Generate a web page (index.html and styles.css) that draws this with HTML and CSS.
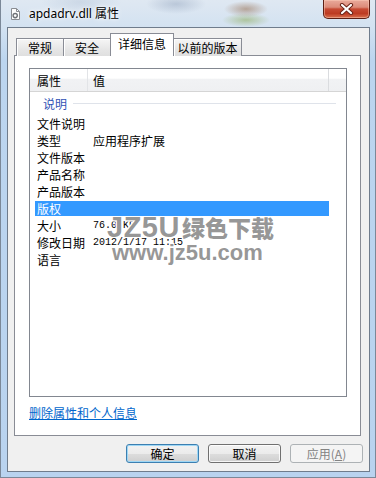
FILE: index.html
```html
<!DOCTYPE html>
<html lang="zh-CN">
<head>
<meta charset="utf-8">
<title>apdadrv.dll 属性</title>
<link rel="stylesheet" href="styles.css">
</head>
<body>
<div class="window">
  <div class="titlebar">
    <svg class="app-icon" width="11" height="12" viewBox="0 0 11 12">
      <path d="M1.5 0.5h5l3 3v8h-8z" fill="#fdfdfd" stroke="#8a8d92"/>
      <path d="M6.5 0.5v3h3" fill="none" stroke="#8a8d92"/>
      <circle cx="5.2" cy="7.6" r="2.1" fill="none" stroke="#6f7378" stroke-width="1.4"/>
    </svg>
    <span class="title">apdadrv.dll 属性</span>
    <div class="close">
      <svg width="15" height="12" viewBox="0 0 15 12">
        <path d="M3 2 L12 10 M12 2 L3 10" stroke="#6b2418" stroke-width="4.2" stroke-linecap="round"/>
        <path d="M3 2 L12 10 M12 2 L3 10" stroke="#ffffff" stroke-width="2.2" stroke-linecap="round"/>
      </svg>
    </div>
  </div>
  <div class="client">
    <div class="tabs">
      <div class="tab t1">常规</div>
      <div class="tab t2">安全</div>
      <div class="tab t3 active">详细信息</div>
      <div class="tab t4">以前的版本</div>
    </div>
    <div class="panel">
      <div class="listview">
        <div class="lv-header">
          <div class="hcell c1">属性</div>
          <div class="hcell c2">值</div>
          <div class="hfill"></div>
        </div>
        <div class="group"><span class="group-name">说明</span><span class="group-line"></span></div>
        <div class="rows">
          <div class="row"><span class="k">文件说明</span><span class="v"></span></div>
          <div class="row"><span class="k">类型</span><span class="v">应用程序扩展</span></div>
          <div class="row"><span class="k">文件版本</span><span class="v"></span></div>
          <div class="row"><span class="k">产品名称</span><span class="v"></span></div>
          <div class="row"><span class="k">产品版本</span><span class="v"></span></div>
          <div class="row selected"><span class="k">版权</span><span class="v"></span></div>
          <div class="row"><span class="k">大小</span><span class="v mono">76.0 KB</span></div>
          <div class="row"><span class="k">修改日期</span><span class="v mono">2012/1/17 11:15</span></div>
          <div class="row"><span class="k">语言</span><span class="v"></span></div>
        </div>
        <div class="watermark">
          <div class="wm1"><span class="wm-latin">JZ5U</span><span class="wm-cjk">绿色下载</span></div>
          <div class="wm2">www.jz5u.com</div>
        </div>
      </div>
      <a class="link" href="#">删除属性和个人信息</a>
    </div>
    <div class="buttons">
      <div class="btn default">确定</div>
      <div class="btn">取消</div>
      <div class="btn disabled">应用(<u>A</u>)</div>
    </div>
  </div>
</div>
</body>
</html>
```

FILE: styles.css
```css
html, body {
  margin: 0;
  padding: 0;
}

body {
  width: 376px;
  height: 478px;
  overflow: hidden;
  font-family: "Noto Sans CJK SC", "Noto Sans", sans-serif;
  font-size: 12px;
  color: #000;
}

.window {
  width: 376px;
  height: 478px;
  box-sizing: border-box;
  display: flex;
  flex-direction: column;
  border: 1px solid #7b8898;
  border-top: none;
  padding-bottom: 5px;
  background:
    radial-gradient(ellipse 22px 8px at 245px 9px, rgba(150, 110, 80, 0.55), rgba(150, 110, 80, 0) 100%),
    radial-gradient(ellipse 24px 7px at 245px 20px, rgba(140, 170, 90, 0.55), rgba(140, 170, 90, 0) 100%),
    radial-gradient(ellipse 30px 10px at 175px 4px, rgba(120, 140, 170, 0.35), rgba(120, 140, 170, 0) 100%),
    radial-gradient(ellipse 40px 12px at 80px 2px, rgba(150, 170, 195, 0.25), rgba(150, 170, 195, 0) 100%),
    linear-gradient(#dfe8f2 0px, #d3e2f1 27px, #bcd5ef 60px, #b9d3ef 100%);
}

/* ---------- title bar ---------- */
.titlebar {
  height: 27px;
  flex: none;
  display: flex;
  align-items: center;
  padding-left: 9px;
}

.app-icon {
  flex: none;
  margin-right: 8px;
}

.title {
  font-family: "Noto Sans", "Noto Sans CJK SC", sans-serif;
  font-size: 12px;
  line-height: 16px;
  color: #000;
  text-shadow: 0 0 6px #fff, 0 0 3px #fff;
}

.close {
  align-self: flex-start;
  margin-left: auto;
  margin-right: 5px;
  width: 47px;
  height: 19px;
  box-sizing: border-box;
  border: 1px solid #5d1f14;
  border-top: none;
  border-radius: 0 0 5px 5px;
  background: linear-gradient(#e9aa9b 0%, #dc8b79 40%, #c64a33 50%, #bd3b22 75%, #d9714f 100%);
  box-shadow: inset 0 0 0 1px rgba(255, 210, 190, 0.45);
  display: flex;
  align-items: center;
  justify-content: center;
}

/* ---------- client ---------- */
.client {
  flex: 1;
  margin: 0 5px 0 6px;
  box-sizing: border-box;
  border: 1px solid #6f7c8c;
  background: #f0f0f0;
  display: flex;
  flex-direction: column;
}

.tabs {
  display: flex;
  align-items: flex-end;
  padding-top: 5px;
  padding-left: 8px;
  margin-bottom: -1px;
  position: relative;
  z-index: 1;
}

.tab {
  box-sizing: border-box;
  height: 18px;
  border: 1px solid #898c95;
  border-bottom: none;
  margin-left: -1px;
  background: linear-gradient(#f6f6f6, #e6e6e6 60%, #dfdfdf);
  box-shadow: inset 1px 1px 0 #ffffff;
  display: flex;
  align-items: center;
  justify-content: center;
  font-size: 12px;
  line-height: 16px;
  padding-top: 1px;
}

.tab.t1 { width: 48px; margin-left: 0; }
.tab.t2 { width: 48px; }
.tab.t3 { width: 64px; }
.tab.t4 { width: 69px; }

.tab.active {
  height: 23px;
  background: #ffffff;
  box-shadow: none;
  padding-top: 0;
  padding-bottom: 3px;
}

.panel {
  margin-left: 6px;
  width: 347px;
  height: 381px;
  box-sizing: border-box;
  border: 1px solid #898c95;
  background: #ffffff;
  display: flex;
  flex-direction: column;
  align-items: flex-start;
}

/* ---------- list view ---------- */
.listview {
  position: relative;
  margin: 12px 0 0 14px;
  width: 318px;
  height: 329px;
  box-sizing: border-box;
  border: 1px solid #828790;
  background: #fff;
  overflow: hidden;
}

.lv-header {
  display: flex;
  height: 23px;
  box-sizing: border-box;
  border-bottom: 1px solid #d5d5d5;
  background: linear-gradient(#ffffff 0%, #ffffff 42%, #f1f2f4 46%, #eff0f2 100%);
}

.hcell {
  box-sizing: border-box;
  border-right: 1px solid #e2e4e7;
  display: flex;
  align-items: center;
  padding-top: 2px;
  line-height: 16px;
}

.c1 { width: 58px; padding-left: 7px; }
.c2 { width: 241px; padding-left: 5px; border-right-color: #dadcdf; }
.hfill { flex: 1; }

.group {
  display: flex;
  align-items: center;
  height: 23px;
  padding-left: 13px;
}

.group-name {
  color: #2f52b5;
  line-height: 16px;
}

.group-line {
  flex: 1;
  height: 1px;
  background: #dfe3ea;
  margin: 0 10px 0 6px;
}

.rows {
  padding-left: 5px;
}

.row {
  width: 294px;
  height: 17px;
  box-sizing: border-box;
  display: flex;
  align-items: center;
  line-height: 15px;
}

.row .k {
  width: 58px;
  padding-left: 2px;
  box-sizing: border-box;
  flex: none;
}

.row .v {
  white-space: nowrap;
}

.row .mono {
  font-family: "Liberation Mono", monospace;
  font-size: 10px;
}

.row.selected {
  padding: 1px 0;
  background: #3399ff;
  background-clip: content-box;
  color: #fff;
}

/* watermark overlay */
.watermark {
  position: absolute;
  left: 77px;
  top: 143px;
  color: rgba(128, 128, 128, 0.82);
  font-weight: 900;
  text-shadow:
    1px 0 0 #fff, -1px 0 0 #fff, 0 1px 0 #fff, 0 -1px 0 #fff,
    1px 1px 0 #fff, -1px -1px 0 #fff, 1px -1px 0 #fff, -1px 1px 0 #fff;
  pointer-events: none;
}

.wm1 {
  display: flex;
  align-items: baseline;
  white-space: nowrap;
  height: 30px;
}

.wm-latin {
  font-family: "Liberation Sans", sans-serif;
  font-size: 29px;
  line-height: 30px;
  font-weight: 700;
  letter-spacing: 0.5px;
}

.wm-cjk {
  font-family: "Noto Sans CJK SC", sans-serif;
  font-size: 23px;
  line-height: 30px;
  font-weight: 900;
  margin-left: 2px;
}

.wm2 {
  font-family: "Liberation Sans", sans-serif;
  font-size: 22px;
  line-height: 22px;
  font-weight: 700;
  margin-left: 5px;
  white-space: nowrap;
}

/* ---------- link ---------- */
.link {
  margin: 8px 0 0 14px;
  color: #0066cc;
  text-decoration: underline;
  line-height: 16px;
  font-size: 12px;
}

/* ---------- buttons ---------- */
.buttons {
  display: flex;
  justify-content: flex-end;
  gap: 9px;
  margin-top: 8px;
  padding-right: 6px;
}

.btn {
  width: 73px;
  height: 19px;
  box-sizing: border-box;
  border: 1px solid #707070;
  border-radius: 3px;
  background: linear-gradient(#f2f2f2 0%, #ebebeb 50%, #dddddd 51%, #cfcfcf 100%);
  box-shadow: inset 0 0 0 1px rgba(255, 255, 255, 0.8);
  display: flex;
  align-items: center;
  justify-content: center;
  line-height: 15px;
  font-size: 12px;
}

.btn.default {
  border-color: #3c7fb1;
  box-shadow: inset 0 0 0 1px #9ed7f5;
}

.btn.disabled {
  border-color: #adb2b5;
  background: #f4f4f4;
  box-shadow: none;
  color: #838383;
}

.btn u {
  text-decoration: underline;
}
```
